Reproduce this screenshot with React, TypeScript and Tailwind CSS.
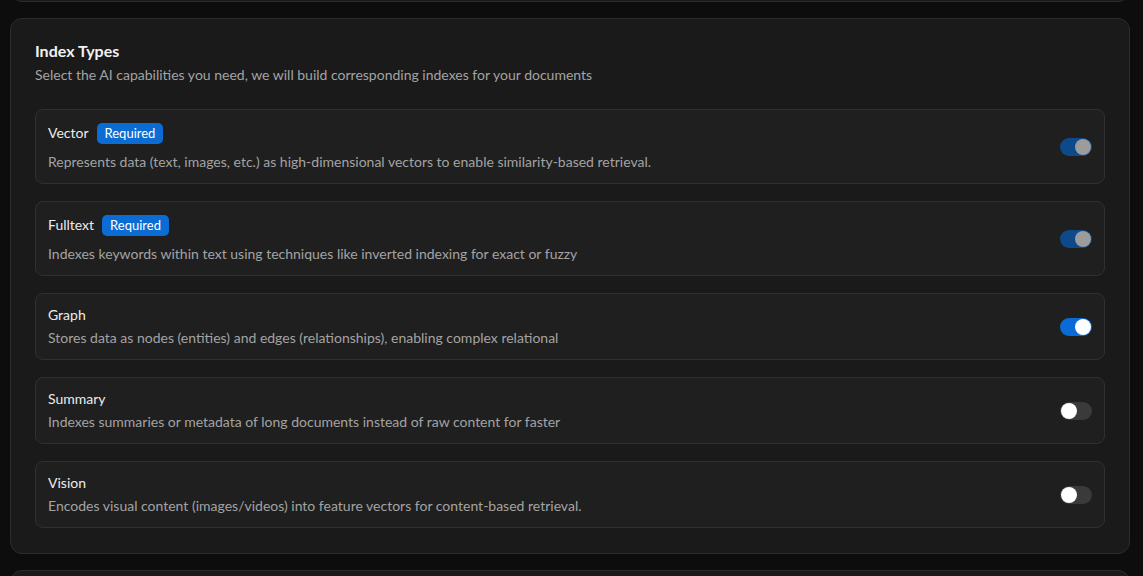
import React from 'react';

type IndexType = {
  name: string;
  description: string;
  required?: boolean;
  enabled: boolean;
};

const INDEX_TYPES: IndexType[] = [
  {
    name: 'Vector',
    description: 'Represents data (text, images, etc.) as high-dimensional vectors to enable similarity-based retrieval.',
    required: true,
    enabled: true,
  },
  {
    name: 'Fulltext',
    description: 'Indexes keywords within text using techniques like inverted indexing for exact or fuzzy',
    required: true,
    enabled: true,
  },
  {
    name: 'Graph',
    description: 'Stores data as nodes (entities) and edges (relationships), enabling complex relational',
    enabled: true,
  },
  {
    name: 'Summary',
    description: 'Indexes summaries or metadata of long documents instead of raw content for faster',
    enabled: false,
  },
  {
    name: 'Vision',
    description: 'Encodes visual content (images/videos) into feature vectors for content-based retrieval.',
    enabled: false,
  },
];

function Toggle({ checked, disabled }: { checked: boolean; disabled?: boolean }) {
  const track = checked ? (disabled ? 'bg-[#0e4a8a]' : 'bg-[#0a6ad6]') : 'bg-[#3a3a3a]';
  const thumb = disabled ? 'bg-[#9c9c9c]' : 'bg-white';
  return (
    <span className={`relative inline-flex h-[18px] w-8 shrink-0 items-center rounded-full ${track}`}>
      <span
        className={`absolute top-px h-4 w-4 rounded-full ${thumb} ${checked ? 'left-[15px]' : 'left-px'}`}
      />
    </span>
  );
}

function IndexRow({ item }: { item: IndexType }) {
  return (
    <div className="flex items-center justify-between rounded-lg border border-[#303030] bg-[#1f1f1f] py-[11px] pl-3 pr-3">
      <div className="flex min-w-0 flex-col">
        <div className={`flex items-center gap-2 ${item.required ? 'h-6' : 'h-5'}`}>
          <span className="text-sm leading-5 text-[#ececec]">{item.name}</span>
          {item.required && (
            <span className="rounded-[5px] bg-[#0b6cd4] px-2 py-[2px] text-[13px] leading-[17px] text-white">
              Required
            </span>
          )}
        </div>
        <p className={`text-sm leading-5 text-[#a3a3a3] ${item.required ? 'mt-[7px]' : 'mt-[3px]'}`}>
          {item.description}
        </p>
      </div>
      <Toggle checked={item.enabled} disabled={item.required} />
    </div>
  );
}

export default function App() {
  return (
    <div
      className="h-[576px] overflow-hidden bg-[#0d0d0d] pl-[10px] pr-[13px]"
      style={{ fontFamily: 'Lato, "Noto Sans", sans-serif' }}
    >
      <div className="flex flex-col gap-4">
        {/* tail of the previous section */}
        <div className="-mt-[40px] h-[42px] rounded-xl border border-[#2c2c2c] bg-[#1a1a1a]" />

        <section className="rounded-xl border border-[#2c2c2c] bg-[#1a1a1a] px-6 pb-[25px] pt-5">
          <h2 className="text-base font-bold leading-6 text-[#f2f2f2]">Index Types</h2>
          <p className="mt-[2px] text-sm leading-5 text-[#a3a3a3]">
            Select the AI capabilities you need, we will build corresponding indexes for your documents
          </p>
          <div className="mt-6 flex flex-col gap-[17px]">
            {INDEX_TYPES.map((item) => (
              <IndexRow key={item.name} item={item} />
            ))}
          </div>
        </section>

        <div className="h-[60px] rounded-xl border border-[#2c2c2c] bg-[#1a1a1a]" />
      </div>
    </div>
  );
}
